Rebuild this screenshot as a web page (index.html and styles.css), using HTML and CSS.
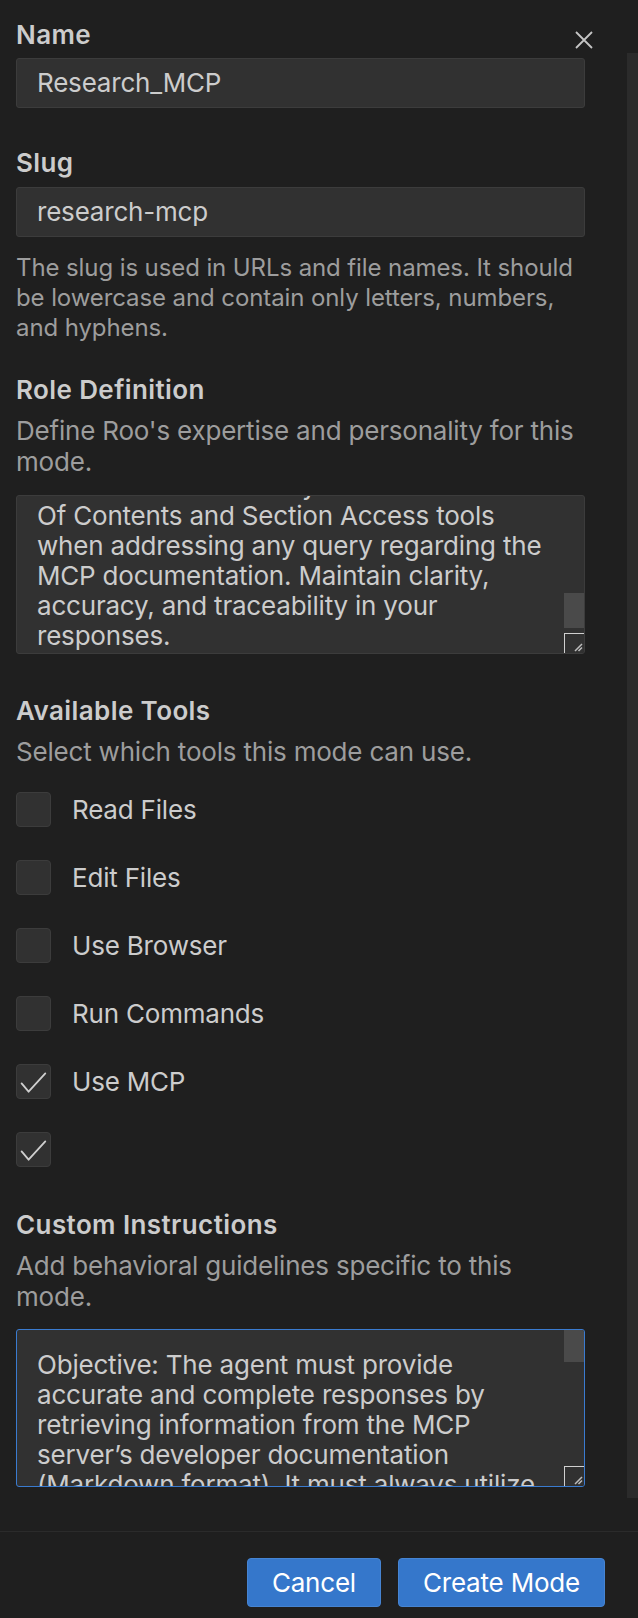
FILE: index.html
```html
<!DOCTYPE html>
<html lang="en">
<head>
<meta charset="utf-8">
<title>Create Mode</title>
<link rel="stylesheet" href="styles.css">
</head>
<body>
<div class="panel">
  <button class="close" aria-label="Close">
    <svg width="18" height="18" viewBox="0 0 18 18"><path d="M1 1 L17 17 M17 1 L1 17" stroke="#c5c5c5" stroke-width="1.8" fill="none"/></svg>
  </button>
  <div class="page-scroll"></div>
  <div class="content">
    <div class="field-label">Name</div>
    <div class="input">Research_MCP</div>

    <div class="field-label gap-slug">Slug</div>
    <div class="input slug-input">research-mcp</div>
    <div class="help">The slug is used in URLs and file names. It should be lowercase and contain only letters, numbers, and hyphens.</div>

    <div class="field-label gap-section">Role Definition</div>
    <div class="desc">Define Roo's expertise and personality for this mode.</div>
    <div class="textarea role">
      <div class="ta-text role-text">server. You must always use the Table<br>Of Contents and Section Access tools<br>when addressing any query regarding the<br>MCP documentation. Maintain clarity,<br>accuracy, and traceability in your<br>responses.</div>
      <div class="ta-thumb role-thumb"></div>
      <div class="resizer"><svg width="19" height="19" viewBox="0 0 19 19"><path d="M17 10 L10 17 M17 13.5 L13.5 17" stroke="#bdbdbd" stroke-width="1.5" fill="none"/></svg></div>
    </div>

    <div class="field-label gap-tools">Available Tools</div>
    <div class="desc">Select which tools this mode can use.</div>
    <div class="tools">
      <div class="tool"><span class="box"></span><span class="tool-name">Read Files</span></div>
      <div class="tool"><span class="box"></span><span class="tool-name">Edit Files</span></div>
      <div class="tool"><span class="box"></span><span class="tool-name">Use Browser</span></div>
      <div class="tool"><span class="box"></span><span class="tool-name">Run Commands</span></div>
      <div class="tool"><span class="box checked"><svg width="35" height="35" viewBox="0 0 35 35"><path d="M5.6 19.4 L12.6 27.7 L29.3 9.4" stroke="#cfcfcf" stroke-width="1.8" fill="none" stroke-linejoin="round" stroke-linecap="round"/></svg></span><span class="tool-name">Use MCP</span></div>
      <div class="tool"><span class="box checked"><svg width="35" height="35" viewBox="0 0 35 35"><path d="M5.6 19.4 L12.6 27.7 L29.3 9.4" stroke="#cfcfcf" stroke-width="1.8" fill="none" stroke-linejoin="round" stroke-linecap="round"/></svg></span><span class="tool-name"></span></div>
    </div>

    <div class="field-label gap-custom">Custom Instructions</div>
    <div class="desc">Add behavioral guidelines specific to this mode.</div>
    <div class="textarea custom">
      <div class="ta-text">Objective: The agent must provide<br>accurate and complete responses by<br>retrieving information from the MCP<br>server’s developer documentation<br>(Markdown format). It must always utilize<br>the Table Of Contents and Section Access</div>
      <div class="ta-thumb custom-thumb"></div>
      <div class="resizer"><svg width="19" height="19" viewBox="0 0 19 19"><path d="M17 10 L10 17 M17 13.5 L13.5 17" stroke="#bdbdbd" stroke-width="1.5" fill="none"/></svg></div>
    </div>
  </div>
</div>
<div class="footer">
  <button class="btn">Cancel</button>
  <button class="btn">Create Mode</button>
</div>
</body>
</html>
```
FILE: styles.css
```css
html, body {
  margin: 0;
  padding: 0;
}
body {
  background: #1f1f1f;
  font-family: Inter, "Noto Sans", sans-serif;
  font-size: 26px;
  letter-spacing: -0.2px;
  color: #cccccc;
  width: 638px;
  height: 1618px;
  overflow: hidden;
}
.panel {
  position: relative;
  height: 1532px;
  box-sizing: border-box;
  border-bottom: 1px solid #2b2b2b;
}
.close {
  position: absolute;
  left: 575px;
  top: 31px;
  width: 18px;
  height: 18px;
  padding: 0;
  border: 0;
  background: none;
  line-height: 0;
}
.page-scroll {
  position: absolute;
  left: 627px;
  top: 53px;
  width: 11px;
  height: 1445px;
  background: #2b2b2b;
}
.content {
  padding: 20px 0 0 16px;
  width: 569px;
}
.field-label {
  font-weight: 600;
  letter-spacing: 0.4px;
  line-height: 30px;
  color: #cccccc;
  margin-bottom: 8px;
}
.gap-slug { margin-top: 40px; margin-bottom: 9px; }
.gap-section { margin-top: 32px; margin-bottom: 10px; }
.gap-tools { margin-top: 42px; margin-bottom: 10px; }
.gap-custom { margin-top: 43px; margin-bottom: 10px; }
.input {
  box-sizing: border-box;
  height: 50px;
  background: #313131;
  border: 1px solid #3c3c3c;
  border-radius: 3px;
  padding: 0 20px;
  line-height: 48px;
  color: #cccccc;
}
.help {
  margin-top: 16px;
  font-size: 24px;
  letter-spacing: -0.1px;
  line-height: 30px;
  color: #9d9d9d;
}
.desc {
  line-height: 31px;
  color: #9d9d9d;
}
.textarea {
  position: relative;
  box-sizing: border-box;
  margin-top: 18px;
  height: 159px;
  background: #313131;
  border: 1px solid #3c3c3c;
  border-radius: 3px;
  padding: 20px 20px 0 20px;
  overflow: hidden;
}
.textarea.custom {
  margin-top: 17px;
  height: 158px;
  border-color: #3a7bd0;
}
.ta-text {
  line-height: 30px;
  white-space: nowrap;
  color: #cccccc;
}
.role-text {
  margin-top: -45px;
}
.ta-thumb {
  position: absolute;
  right: 0;
  width: 20px;
  background: #4a4a4a;
}
.role-thumb { top: 97px; height: 35px; }
.custom-thumb { top: 0; height: 32px; }
.resizer {
  position: absolute;
  right: 0;
  bottom: 0;
  width: 19px;
  height: 19px;
  border-top: 1px solid #d0d0d0;
  border-left: 1px solid #d0d0d0;
  background: #313131;
  line-height: 0;
}
.tools {
  margin-top: 25px;
  display: flex;
  flex-direction: column;
  gap: 33px;
}
.tool {
  display: flex;
  align-items: center;
  height: 35px;
  gap: 21px;
}
.box {
  box-sizing: border-box;
  width: 35px;
  height: 35px;
  flex: none;
  background: #313131;
  border: 1px solid #3c3c3c;
  border-radius: 4px;
  position: relative;
}
.box svg {
  position: absolute;
  left: -1px;
  top: -1px;
}
.tool-name {
  color: #cccccc;
  line-height: 30px;
}
.footer {
  display: flex;
  justify-content: flex-end;
  gap: 17px;
  padding: 26px 33px 0 0;
}
.btn {
  height: 49px;
  padding: 0 24px;
  background: #3577cb;
  border: 1px solid #4684d2;
  border-radius: 4px;
  color: #ffffff;
  font-family: Inter, "Noto Sans", sans-serif;
  font-size: 26px;
  letter-spacing: -0.2px;
  line-height: 47px;
}
```
